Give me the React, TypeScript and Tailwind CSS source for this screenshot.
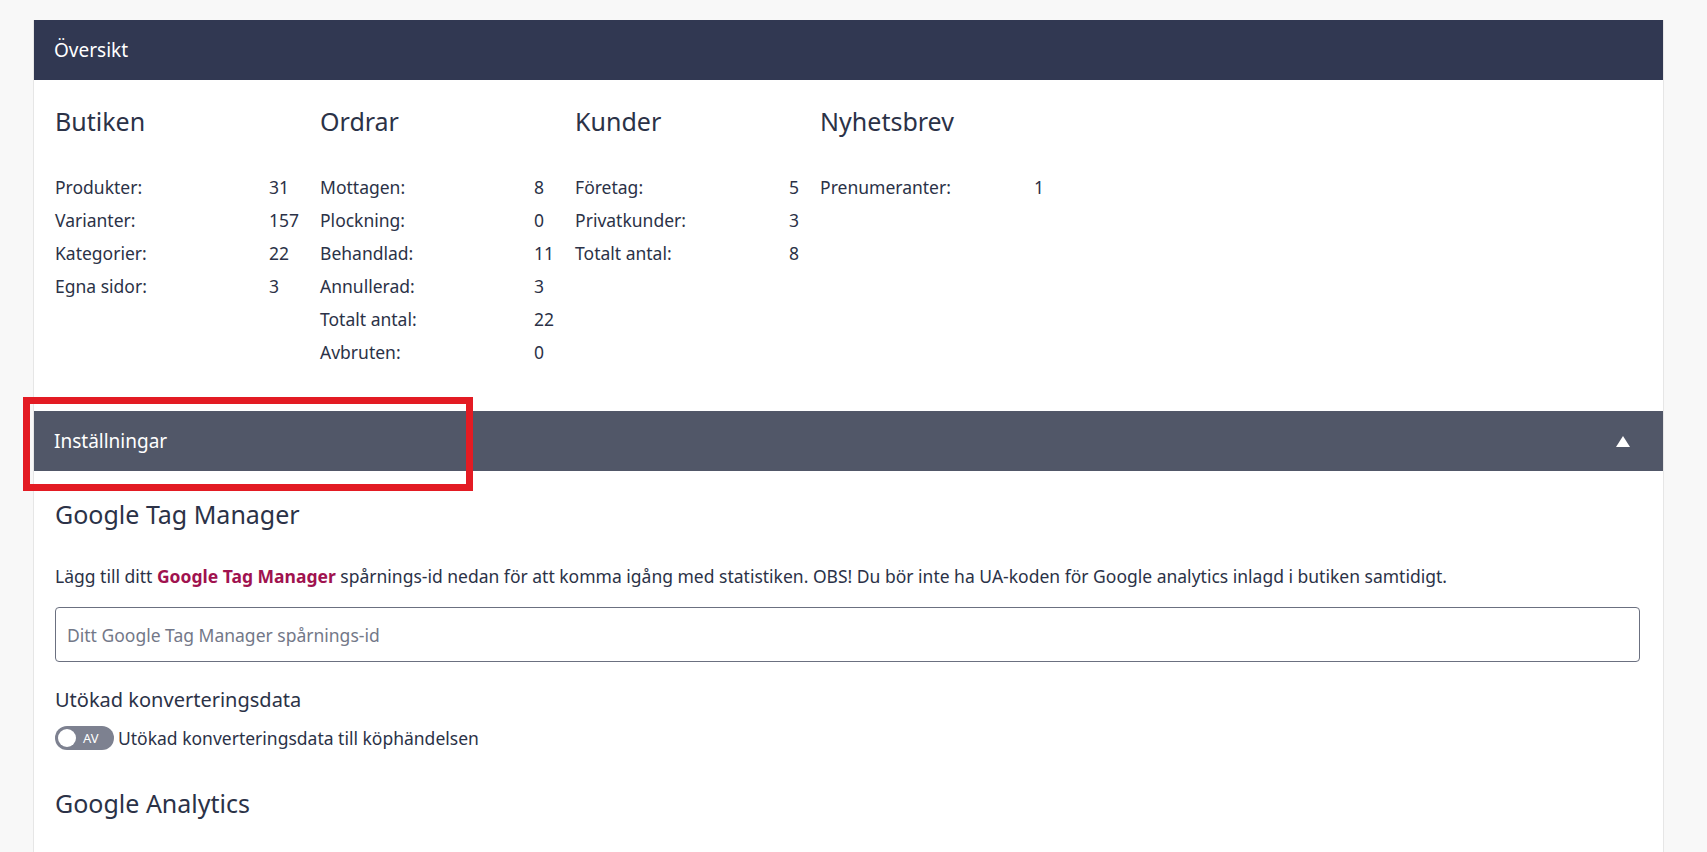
import React, { useState } from "react";

type Row = { label: string; value: number };
type Group = { title: string; rows: Row[] };

const groups: Group[] = [
  {
    title: "Butiken",
    rows: [
      { label: "Produkter:", value: 31 },
      { label: "Varianter:", value: 157 },
      { label: "Kategorier:", value: 22 },
      { label: "Egna sidor:", value: 3 },
    ],
  },
  {
    title: "Ordrar",
    rows: [
      { label: "Mottagen:", value: 8 },
      { label: "Plockning:", value: 0 },
      { label: "Behandlad:", value: 11 },
      { label: "Annullerad:", value: 3 },
      { label: "Totalt antal:", value: 22 },
      { label: "Avbruten:", value: 0 },
    ],
  },
  {
    title: "Kunder",
    rows: [
      { label: "Företag:", value: 5 },
      { label: "Privatkunder:", value: 3 },
      { label: "Totalt antal:", value: 8 },
    ],
  },
  {
    title: "Nyhetsbrev",
    rows: [{ label: "Prenumeranter:", value: 1 }],
  },
];

function StatGroup({ group }: { group: Group }) {
  return (
    <div className="flex flex-col">
      <h3 className="text-[25px] leading-[29px] font-normal">{group.title}</h3>
      <div className="mt-[35px] flex flex-col">
        {group.rows.map((r, i) => (
          <div key={i} className="flex h-[33px] items-center">
            <span className="w-[214px]">{r.label}</span>
            <span>{r.value}</span>
          </div>
        ))}
      </div>
    </div>
  );
}

function Toggle() {
  const [on, setOn] = useState<boolean>(false);
  return (
    <button
      onClick={() => setOn((prev) => !prev)}
      className="relative flex h-[24px] w-[59px] shrink-0 items-center rounded-full bg-[#7d8190]"
    >
      <span className="absolute left-[3px] top-[3px] h-[18px] w-[18px] rounded-full bg-white" />
      <span className="ml-[28px] text-[13px] leading-none text-white">{on ? "PÅ" : "AV"}</span>
    </button>
  );
}

export default function App() {
  return (
    <div
      className="min-h-screen bg-[#f8f8f8] pl-[34px] pr-[44px] pt-[20px] text-[17.5px] text-[#2b3247]"
      style={{ fontFamily: '"Noto Sans", "Open Sans", sans-serif' }}
    >
      <div className="relative bg-white shadow-[-1px_0_0_#e6e6e6,1px_0_0_#e6e6e6]">
        <div className="flex h-[60px] items-center bg-[#313852] px-[20px] text-[19px] text-white">
          Översikt
        </div>

        <div className="flex gap-[21px] px-[21px] pt-[27px] pb-[42px]">
          {groups.map((g) => (
            <StatGroup key={g.title} group={g} />
          ))}
        </div>

        <div className="flex h-[60px] items-center justify-between bg-[#515768] pl-[20px] pr-[33px] text-[19px] text-white">
          <span>Inställningar</span>
          <svg width="14" height="11" viewBox="0 0 14 11">
            <path d="M7 0 L14 11 L0 11 Z" fill="#ffffff" />
          </svg>
        </div>

        {/* highlight frame around the section header */}
        <div className="pointer-events-none absolute left-[-11px] top-[377px] h-[94px] w-[450px] border-[7px] border-[#e31b23]" />

        <div className="pl-[21px] pr-[23px] pt-[29px] pb-[40px]">
          <h3 className="text-[25px] leading-[29px]">Google Tag Manager</h3>
          <p className="mt-[35px] leading-[25px]">
            Lägg till ditt{" "}
            <a className="font-bold text-[#a0124f]">Google Tag Manager</a>{" "}
            spårnings-id nedan för att komma igång med statistiken. OBS! Du bör inte ha UA-koden för
            Google analytics inlagd i butiken samtidigt.
          </p>
          <input
            className="mt-[18px] h-[55px] w-full rounded-[4px] border border-[#6b7080] px-[11px] text-[17.5px] outline-none placeholder:text-[#737888]"
            placeholder="Ditt Google Tag Manager spårnings-id"
          />
          <div className="mt-[25px] text-[20px] leading-[26px]">Utökad konverteringsdata</div>
          <label className="mt-[12px] flex items-center gap-[4px]">
            <Toggle />
            <span className="leading-[26px]">Utökad konverteringsdata till köphändelsen</span>
          </label>
          <h3 className="mt-[38px] text-[25px] leading-[29px]">Google Analytics</h3>
          <div className="h-[200px]" />
        </div>
      </div>
    </div>
  );
}
